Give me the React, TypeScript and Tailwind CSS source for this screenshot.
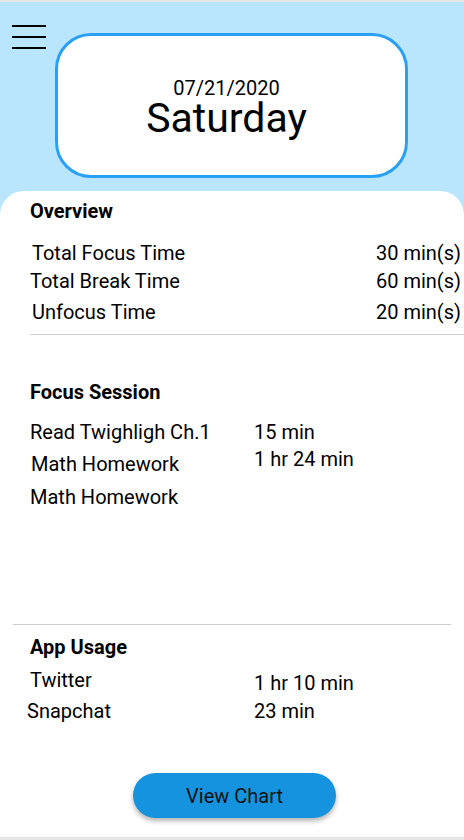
import React from "react";

export default function App() {
  return (
    <div
      className="w-[464px] h-[840px] flex flex-col bg-[#b9e5fd] overflow-hidden text-black"
      style={{ fontFamily: "Roboto, 'Liberation Sans', sans-serif" }}
    >
      <div className="h-[2px] bg-[#e6e6e6]" />

      {/* header */}
      <div className="relative h-[189px]">
        <div className="absolute left-[12px] top-[23px] w-[34px] flex flex-col gap-[9px]">
          <div className="h-[2px] bg-black" />
          <div className="h-[2px] bg-black" />
          <div className="h-[2px] bg-black" />
        </div>

        <div className="ml-[55px] mt-[31px] w-[353px] h-[145px] border-[3px] border-[#2aa0f5] rounded-[36px] bg-white flex flex-col items-center pt-[42px] pr-[10px]">
          <p className="text-[20px] leading-[20px]">07/21/2020</p>
          <p className="text-[41px] leading-[40px]">Saturday</p>
        </div>
      </div>

      {/* content */}
      <div className="flex-1 bg-white rounded-t-[24px] flex flex-col">
        <div className="pl-[30px] pt-[8px]">
          <h2 className="font-bold text-[20px] leading-[24px]">Overview</h2>

          <div className="mt-[16px] flex flex-col text-[20px] leading-[28px]">
            <div className="flex justify-between pr-[3px] pl-[2px]">
              <span>Total Focus Time</span>
              <span>30 min(s)</span>
            </div>
            <div className="flex justify-between pr-[3px]">
              <span>Total Break Time</span>
              <span>60 min(s)</span>
            </div>
            <div className="flex justify-between pr-[3px] pl-[2px] mt-[3px]">
              <span>Unfocus Time</span>
              <span>20 min(s)</span>
            </div>
          </div>

          <div className="mt-[8px] h-px bg-[#cfcfcf]" />
        </div>

        <div className="pl-[30px] pt-[45px]">
          <h2 className="font-bold text-[20px] leading-[24px]">Focus Session</h2>

          <div className="mt-[14px] grid grid-cols-[224px_1fr] items-start text-[20px] leading-[28px]">
            <span>Read Twighligh Ch.1</span>
            <span>15 min</span>
            <span className="pl-[1px] mt-[4px]">Math Homework</span>
            <span className="-mt-[1px]">1 hr 24 min</span>
            <span className="mt-[5px]">Math Homework</span>
            <span />
          </div>
        </div>

        <div className="mt-[113px] ml-[13px] w-[438px] h-px bg-[#cfcfcf]" />

        <div className="pl-[30px] pt-[10px]">
          <h2 className="font-bold text-[20px] leading-[24px]">App Usage</h2>

          <div className="grid grid-cols-[224px_1fr] items-start text-[20px] leading-[28px]">
            <span className="mt-[7px]">Twitter</span>
            <span className="mt-[10px]">1 hr 10 min</span>
            <span className="-ml-[3px]">Snapchat</span>
            <span>23 min</span>
          </div>
        </div>

        <div className="mt-[48px] flex justify-center pl-[5px]">
          <button className="w-[203px] h-[45px] rounded-full bg-[#1593de] shadow-[0_3px_5px_rgba(0,0,0,0.3)] text-[20px] text-[#111]">
            View Chart
          </button>
        </div>

        <div className="flex-1" />
        <div className="h-[3px] bg-[#e6e6e6]" />
      </div>
    </div>
  );
}
